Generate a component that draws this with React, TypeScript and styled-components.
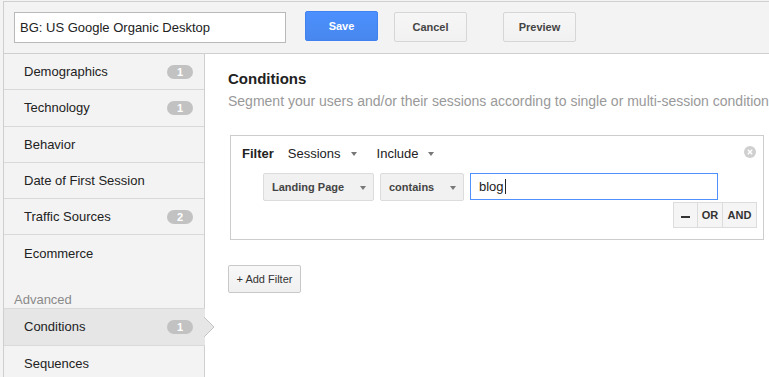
import styled, { createGlobalStyle } from 'styled-components';

const GlobalStyle = createGlobalStyle`
	html, body {
		margin: 0;
		padding: 0;
		background: #f3f3f3;
		font-family: 'Liberation Sans', Arial, sans-serif;
		overflow: hidden;
	}
`;

const Page = styled.div`
	margin-left: 3px;
	margin-top: 1px;
	border-top: 1px solid #cfcfcf;
	border-left: 1px solid #cfcfcf;
	width: 766px;
	height: 376px;
	display: flex;
	flex-direction: column;
	overflow: hidden;
`;

const TopBar = styled.div`
	height: 51px;
	flex: none;
	display: flex;
	align-items: flex-start;
	background: #f3f3f3;
	border-bottom: 1px solid #cfcfcf;
	padding-left: 10px;
`;

const NameInput = styled.div`
	margin-top: 10px;
	width: 265px;
	height: 29px;
	border: 1px solid #b9b9b9;
	background: #fff;
	font-size: 13px;
	color: #222;
	display: flex;
	align-items: center;
	padding-left: 5px;
`;

const Button = styled.div<{ $primary?: boolean; $gap: number; $top: number }>`
	margin-left: ${(p) => p.$gap}px;
	margin-top: ${(p) => p.$top}px;
	width: 71px;
	height: 28px;
	display: flex;
	align-items: center;
	justify-content: center;
	font-size: 11px;
	font-weight: bold;
	border-radius: 2px;
	color: ${(p) => (p.$primary ? '#fff' : '#444')};
	background: ${(p) => (p.$primary ? 'linear-gradient(#4d90fe, #4787ed)' : 'linear-gradient(#f6f6f6, #f1f1f1)')};
	border: 1px solid ${(p) => (p.$primary ? '#3f82f0' : '#d6d6d6')};
`;

const Body = styled.div`
	flex: 1;
	display: flex;
	min-height: 0;
`;

const Sidebar = styled.div`
	width: 200px;
	flex: none;
	background: #f3f3f3;
	border-right: 1px solid #cfcfcf;
	display: flex;
	flex-direction: column;
`;

const NavItem = styled.div<{ $active?: boolean; $last?: boolean; $topLine?: boolean }>`
	position: relative;
	height: ${(p) => (p.$active ? '36px' : '35.3px')};
	flex: none;
	display: flex;
	align-items: center;
	justify-content: space-between;
	padding: 0 11px 0 20px;
	font-size: 13px;
	color: #222;
	background: ${(p) => (p.$active ? '#e6e6e6' : 'transparent')};
	border-bottom: ${(p) => (p.$last ? 'none' : '1px solid #d9d9d9')};
	border-top: ${(p) => (p.$topLine ? '1px solid #d9d9d9' : 'none')};
	margin-right: ${(p) => (p.$active ? '-1px' : '0')};
	padding-right: ${(p) => (p.$active ? '12px' : '11px')};
`;

const Pointer = styled.svg`
	position: absolute;
	right: -10px;
	top: 8px;
`;

const Badge = styled.span`
	width: 26px;
	height: 14px;
	border-radius: 7px;
	background: #c2c2c2;
	color: #fff;
	font-size: 11px;
	font-weight: bold;
	display: flex;
	align-items: center;
	justify-content: center;
`;

const SectionLabel = styled.div`
	margin-top: 21px;
	padding-left: 10px;
	height: 16px;
	font-size: 13px;
	color: #8a8a8a;
	line-height: 16px;
`;

const Main = styled.div`
	flex: 1;
	background: #fff;
	padding: 16px 0 0 23px;
	overflow: hidden;
	min-width: 0;
`;

const Heading = styled.div`
	font-size: 15px;
	font-weight: bold;
	color: #222;
	line-height: 18px;
`;

const Subtitle = styled.div`
	margin-top: 5px;
	font-size: 14px;
	color: #999;
	white-space: nowrap;
	line-height: 16px;
`;

const FilterBox = styled.div`
	margin: 26px 0 0 2px;
	width: 534px;
	height: 105px;
	border: 1px solid #cdcdcd;
	position: relative;
	padding: 9px 0 0 11px;
	box-sizing: border-box;
`;

const FilterHead = styled.div`
	display: flex;
	align-items: center;
	height: 16px;
	font-size: 13px;
	color: #222;
`;

const FilterLabel = styled.span`
	font-weight: bold;
	margin-right: 14px;
`;

const Picker = styled.span<{ $gap: number }>`
	display: inline-flex;
	align-items: center;
	margin-right: ${(p) => p.$gap}px;
`;

const Caret = styled.span<{ $ml: number }>`
	margin-left: ${(p) => p.$ml}px;
	width: 0;
	height: 0;
	border-left: 3.5px solid transparent;
	border-right: 3.5px solid transparent;
	border-top: 4px solid #777;
	margin-top: 1px;
`;

const CloseIcon = styled.svg`
	position: absolute;
	right: 7px;
	top: 10px;
`;

const ConditionRow = styled.div`
	display: flex;
	margin: 12px 0 0 21px;
	gap: 6px;
`;

const DropButton = styled.div<{ $w: number }>`
	width: ${(p) => p.$w}px;
	height: 28px;
	box-sizing: border-box;
	border: 1px solid #dcdcdc;
	border-radius: 2px;
	background: #f1f1f1;
	display: flex;
	align-items: center;
	justify-content: space-between;
	padding: 0 7px 0 8px;
	font-size: 11px;
	font-weight: bold;
	color: #444;
`;

const ValueInput = styled.div`
	width: 248px;
	height: 27px;
	box-sizing: border-box;
	border: 1px solid #4d90fe;
	display: flex;
	align-items: center;
	padding-left: 8px;
	font-size: 13px;
	color: #222;
`;

const Cursor = styled.span`
	display: inline-block;
	width: 1px;
	height: 15px;
	background: #222;
	margin-left: 1px;
`;

const OpRow = styled.div`
	display: flex;
	justify-content: flex-end;
	margin: 1px 6px 0 0;
`;

const OpButton = styled.div<{ $w: number }>`
	width: ${(p) => p.$w}px;
	height: 26px;
	box-sizing: border-box;
	border: 1px solid #dcdcdc;
	margin-left: -1px;
	background: #f5f5f5;
	display: flex;
	align-items: center;
	justify-content: center;
	font-size: 11px;
	font-weight: bold;
	color: #333;
`;

const MinusBar = styled.span`
	width: 9px;
	height: 2px;
	background: #333;
	margin-top: 3px;
`;

const AddFilter = styled.div`
	margin-top: 25px;
	width: 73px;
	height: 28px;
	box-sizing: border-box;
	border: 1px solid #c8c8c8;
	border-radius: 2px;
	background: linear-gradient(#f8f8f8, #f0f0f0);
	display: flex;
	align-items: center;
	justify-content: center;
	font-size: 11px;
	color: #333;
`;

const items = [
	{ label: 'Demographics', count: 1 },
	{ label: 'Technology', count: 1 },
	{ label: 'Behavior' },
	{ label: 'Date of First Session' },
	{ label: 'Traffic Sources', count: 2 },
	{ label: 'Ecommerce', last: true },
];

export default function App() {
	return (
		<>
			<GlobalStyle />
			<Page>
				<TopBar>
					<NameInput>BG: US Google Organic Desktop</NameInput>
					<Button $primary $gap={19} $top={9}>Save</Button>
					<Button $gap={16} $top={10}>Cancel</Button>
					<Button $gap={36} $top={10}>Preview</Button>
				</TopBar>
				<Body>
					<Sidebar>
						{items.map((it) => (
							<NavItem key={it.label} $last={it.last}>
								{it.label}
								{it.count && <Badge>{it.count}</Badge>}
							</NavItem>
						))}
						<SectionLabel>Advanced</SectionLabel>
						<NavItem $active $topLine>
							Conditions
							<Badge>1</Badge>
							<Pointer width="11" height="20" viewBox="0 0 11 20">
								<path d="M0 0 L10 10 L0 20 Z" fill="#e6e6e6" />
								<path d="M0 0 L10 10 L0 20" fill="none" stroke="#c4c4c4" strokeWidth="1" />
							</Pointer>
						</NavItem>
						<NavItem>Sequences</NavItem>
					</Sidebar>
					<Main>
						<Heading>Conditions</Heading>
						<Subtitle>Segment your users and/or their sessions according to single or multi-session conditions.</Subtitle>
						<FilterBox>
							<FilterHead>
								<FilterLabel>Filter</FilterLabel>
								<Picker $gap={20}>
									Sessions<Caret $ml={10} />
								</Picker>
								<Picker $gap={0}>
									Include<Caret $ml={10} />
								</Picker>
							</FilterHead>
							<CloseIcon width="12" height="12" viewBox="0 0 12 12">
								<circle cx="6" cy="6" r="6" fill="#cfcfcf" />
								<path d="M3.8 3.8 L8.2 8.2 M8.2 3.8 L3.8 8.2" stroke="#fff" strokeWidth="1.4" />
							</CloseIcon>
							<ConditionRow>
								<DropButton $w={111}>
									Landing Page<Caret $ml={0} />
								</DropButton>
								<DropButton $w={84}>
									contains<Caret $ml={0} />
								</DropButton>
								<ValueInput>
									blog<Cursor />
								</ValueInput>
							</ConditionRow>
							<OpRow>
								<OpButton $w={25}>
									<MinusBar />
								</OpButton>
								<OpButton $w={26}>OR</OpButton>
								<OpButton $w={35}>AND</OpButton>
							</OpRow>
						</FilterBox>
						<AddFilter>+ Add Filter</AddFilter>
					</Main>
				</Body>
			</Page>
		</>
	);
}
